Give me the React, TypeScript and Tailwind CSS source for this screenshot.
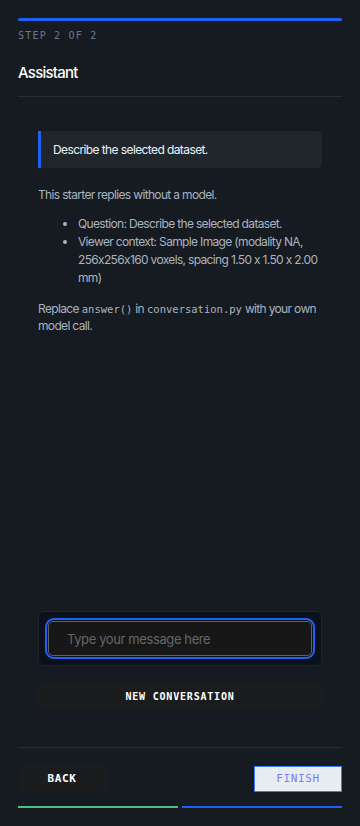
const mono = "font-['DejaVu_Sans_Mono',monospace]";
const sans = "font-['Inter','Noto_Sans',sans-serif]";

const context = [
  "Question: Describe the selected dataset.",
  "Viewer context: Sample Image (modality NA, 256x256x160 voxels, spacing 1.50 x 1.50 x 2.00 mm)",
];

export default function App() {
  return (
    <div className={`flex h-[826px] w-[360px] flex-col bg-[#161b22] px-[18px] pt-[18px] ${sans}`}>
      {/* Step header */}
      <div className="h-[3px] w-full rounded-full bg-[#2160f5]" />
      <p className={`mt-[9px] text-[10px] leading-[12px] tracking-[0.12em] text-[#6c7884] ${mono}`}>STEP 2 OF 2</p>
      <h1 className="mt-[21px] text-[15px] font-medium leading-[20px] tracking-[-0.05em] text-white">Assistant</h1>
      <div className="mt-[13px] h-px w-full bg-[#272c33]" />

      {/* Conversation */}
      <div className="flex flex-1 flex-col px-[20px]">
        <div className="mt-[34px] flex h-[37px] items-center rounded-r-[5px] border-l-[3px] border-[#2160f5] bg-[#21262d] pl-[12px]">
          <span className="text-[12px] tracking-[-0.05em] text-[#eef1f4]">Describe the selected dataset.</span>
        </div>

        <div className="mt-[18px] text-[12px] leading-[18px] tracking-[-0.055em] text-[#a9b3bf]">
          <p>This starter replies without a model.</p>
          <ul className="mt-[11px] list-disc pl-[40px]">
            {context.map((line) => (
              <li key={line}>{line}</li>
            ))}
          </ul>
          <p className="mt-[13px] leading-[17px]">
            Replace<code className={`mx-[3px] text-[10.5px] leading-none tracking-normal ${mono}`}>answer()</code>in
            <code className={`mx-[3px] text-[10.5px] leading-none tracking-normal ${mono}`}>conversation.py</code>with
            your own model call.
          </p>
        </div>

        <div className="flex-1" />

        <div className="rounded-[6px] border border-[#1e2530] bg-[#0b111a] p-[9px]">
          <div className="rounded-[6px] ring-2 ring-[#2160f5] ring-offset-1 ring-offset-[#0b111a]">
            <input
              className="h-[35px] w-full rounded-[5px] border border-[#5c5f63] bg-[#171717] px-[18px] text-[13px] tracking-[-0.03em] text-white outline-none placeholder:text-[#62666b]"
              placeholder="Type your message here"
            />
          </div>
        </div>

        <button className={`mt-[17px] h-[26px] w-full bg-[#1b1c1d] text-[10px] font-bold tracking-[0.08em] text-white ${mono}`}>
          NEW CONVERSATION
        </button>
      </div>

      {/* Footer */}
      <div className="mt-[38px] h-px w-full bg-[#272c33]" />
      <div className="mt-[18px] flex items-center justify-between">
        <button className={`h-[26px] w-[88px] bg-[#1b1c1d] text-[11px] font-bold tracking-[0.06em] text-white ${mono}`}>
          BACK
        </button>
        <button className={`h-[26px] w-[88px] border border-[#3b7bff] bg-[#e8edf1] text-[11px] tracking-[0.06em] text-[#7a7cff] ${mono}`}>
          FINISH
        </button>
      </div>
      <div className="mt-[14px] flex gap-[4px]">
        <div className="h-[2px] flex-1 bg-[#4ebf7a]" />
        <div className="h-[2px] flex-1 bg-[#2160f5]" />
      </div>
      <div className="h-[18px]" />
    </div>
  );
}
